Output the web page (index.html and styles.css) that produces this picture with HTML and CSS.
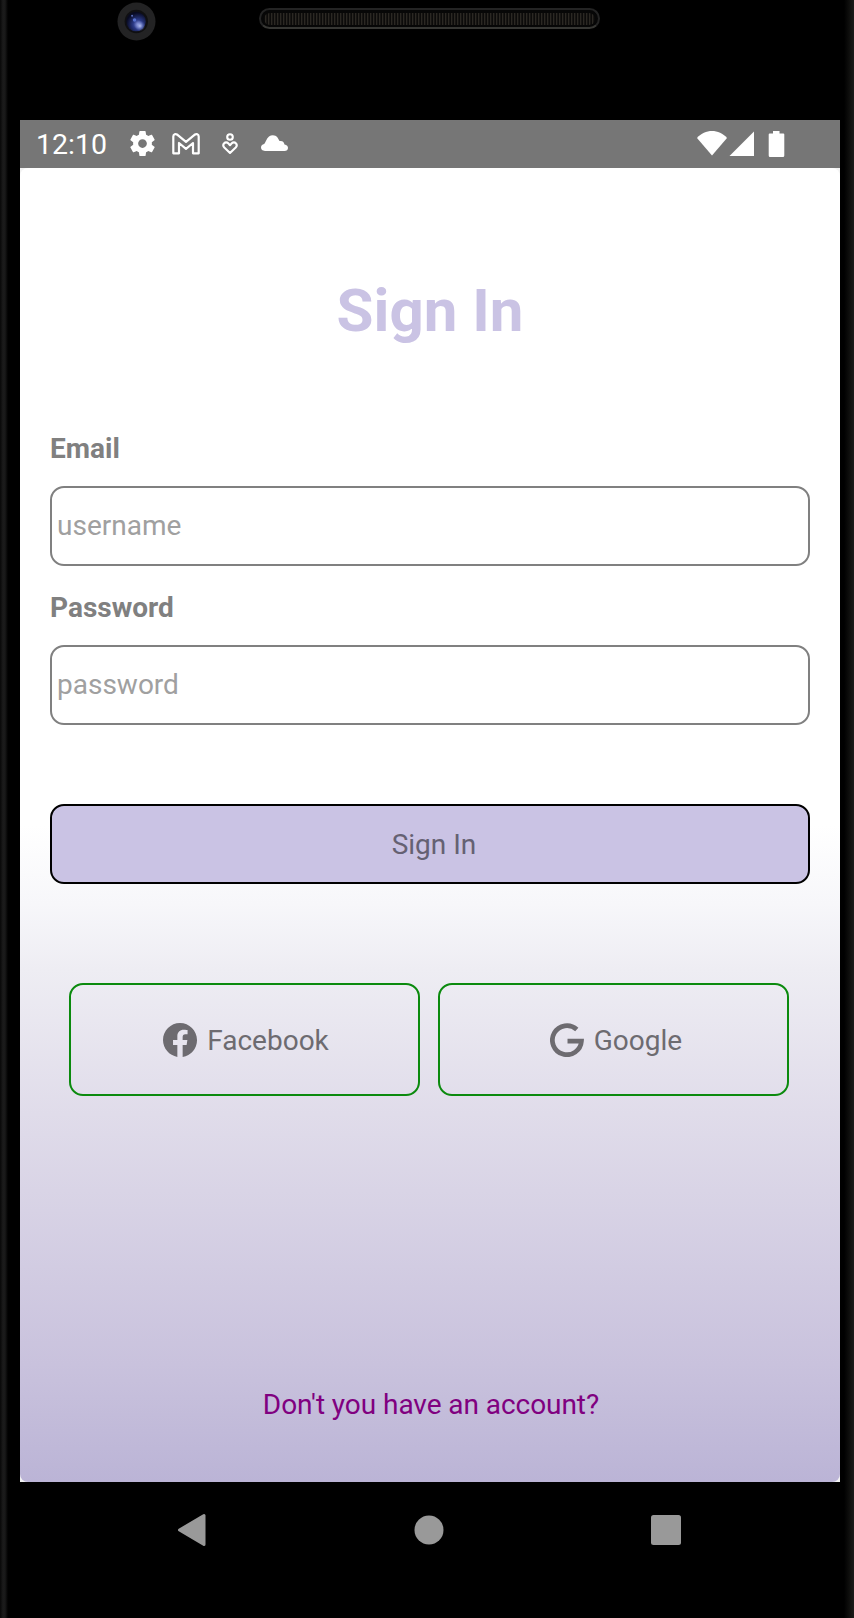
FILE: index.html
```html
<!DOCTYPE html>
<html lang="en">
<head>
<meta charset="utf-8">
<title>Sign In</title>
<link rel="stylesheet" href="styles.css">
</head>
<body>
<div class="phone">
  <header class="bezel">
    <svg class="camera" viewBox="0 0 40 40">
      <defs>
        <radialGradient id="lens" cx=".6" cy=".65" r=".6">
          <stop offset="0" stop-color="#8794dc"/><stop offset=".4" stop-color="#2a3986"/><stop offset="1" stop-color="#080a20"/>
        </radialGradient>
        <radialGradient id="glint">
          <stop offset="0" stop-color="#b4c0f2"/><stop offset="1" stop-color="#6878c8" stop-opacity="0"/>
        </radialGradient>
      </defs>
      <circle cx="20" cy="20" r="19.5" fill="#232324"/>
      <circle cx="19.8" cy="20" r="12" fill="#101012"/>
      <circle cx="19.5" cy="20" r="10" fill="url(#lens)"/>
      <circle cx="23.5" cy="24.5" r="5.5" fill="url(#glint)"/>
      <circle cx="18" cy="18.5" r="1.8" fill="#5670cc"/>
      <circle cx="15.5" cy="14" r="1" fill="#5b70c0"/>
    </svg>
    <div class="speaker"><div class="mesh"></div></div>
  </header>
  <main class="screen">
    <div class="status">
      <span class="clock">12:10</span>
      <svg class="gear" viewBox="2 2 20 20"><path fill="#fff" d="M19.43 12.98c.04-.32.07-.64.07-.98s-.03-.66-.07-.98l2.11-1.65c.19-.15.24-.42.12-.64l-2-3.46c-.12-.22-.39-.3-.61-.22l-2.49 1c-.52-.4-1.08-.73-1.69-.98l-.38-2.65C14.46 2.18 14.25 2 14 2h-4c-.25 0-.46.18-.49.42l-.38 2.65c-.61.25-1.17.59-1.69.98l-2.49-1c-.23-.09-.49 0-.61.22l-2 3.46c-.13.22-.07.49.12.64l2.11 1.65c-.04.32-.07.65-.07.98s.03.66.07.98l-2.11 1.65c-.19.15-.24.42-.12.64l2 3.46c.12.22.39.3.61.22l2.49-1c.52.4 1.08.73 1.69.98l.38 2.65c.03.24.24.42.49.42h4c.25 0 .46-.18.49-.42l.38-2.65c.61-.25 1.17-.59 1.69-.98l2.49 1c.23.09.49 0 .61-.22l2-3.46c.12-.22.07-.49-.12-.64l-2.11-1.65zM12 15.5c-1.93 0-3.5-1.57-3.5-3.500s1.570-3.500 3.500-3.500 3.500 1.570 3.500 3.500-1.570 3.500-3.500 3.500z"/></svg>
      <svg class="mail" viewBox="0 0 28 22"><path fill="none" stroke="#fff" stroke-width="2.200" stroke-linejoin="round" d="M1.300 3.500C1.300 1 3.500 .6 5.500 1.800L14 8.800 22.500 1.800C24.500 .6 26.700 1 26.700 3.500V20.300H21V10L14 15.800 7 10V20.300H1.300Z"/></svg>
      <svg class="care" viewBox="0 0 16 22"><g fill="none" stroke="#fff" stroke-width="2.100"><circle cx="8" cy="4" r="2.800"/><path stroke-linejoin="round" d="M8 20L2.300 14.500C-.5 11.500 3.500 7.500 6.200 10.300L8 12.200 9.800 10.300C12.500 7.500 16.500 11.500 13.700 14.500Z"/></g></svg>
      <svg class="cloud" viewBox="0 0 27 16"><path fill="#fff" d="M4 16Q0 15.500 0 12.500 0 9.500 3.200 9C4.500 7.500 5.500 3.500 8 1.500 10.500-.2 14.500-.2 16.500 2.500L18.500 6C22 5.500 23 7.500 23.500 9.500Q27 10 27 13 26.800 16 23.500 16Z"/></svg>
      <svg class="signals" viewBox="0 0 88 28">
        <g fill="#fff"><path d="M0 8C8-1.200 22-1.200 30 8L15 25.500Z"/><path d="M32.500 26L57 1.500V26Z"/><path d="M76 1V3.500H72.700Q71.700 3.500 71.700 4.500V25.500Q71.700 27 73 27H86Q87.300 27 87.300 25.500V4.500Q87.300 3.500 86.300 3.500H82.500V1Z"/></g>
      </svg>
    </div>
    <div class="window">
      <form class="content">
        <h1 class="title">Sign In</h1>
        <label class="label" for="email">Email</label>
        <input class="field" id="email" type="text" placeholder="username">
        <label class="label label-password" for="pass">Password</label>
        <input class="field" id="pass" type="password" placeholder="password">
        <button class="submit" type="button">Sign In</button>
        <div class="socials">
          <button class="social" type="button">
            <svg class="icon" viewBox="2 2 20 20"><path fill="currentColor" d="M12 2.040C6.500 2.040 2 6.530 2 12.060C2 17.060 5.660 21.210 10.440 21.960V14.960H7.900V12.060H10.440V9.850C10.440 7.340 11.930 5.960 14.220 5.960C15.310 5.960 16.450 6.150 16.450 6.150V8.620H15.190C13.950 8.620 13.560 9.390 13.560 10.180V12.060H16.340L15.890 14.960H13.560V21.960A10 10 0 0 0 22 12.060C22 6.530 17.500 2.040 12 2.040Z"/></svg>
            <span>Facebook</span>
          </button>
          <button class="social social-google" type="button">
            <svg class="icon" viewBox="0 0 33 33"><path fill="none" stroke="currentColor" stroke-width="4.600" d="M26 6.300A14.100 14.100 0 1 0 30.500 17.600H17"/></svg>
            <span>Google</span>
          </button>
        </div>
        <a class="signup">Don't you have an account?</a>
      </form>
    </div>
  </main>
  <nav class="nav">
    <svg viewBox="0 0 30 34"><path fill="#999" stroke="#999" stroke-width="3" stroke-linejoin="round" d="M2.500 17L27 2.500V31.500Z"/></svg>
    <svg viewBox="0 0 30 34"><circle cx="15" cy="17" r="14.500" fill="#999"/></svg>
    <svg viewBox="0 0 30 34"><rect y="2" width="30" height="30" rx="2.500" fill="#999"/></svg>
  </nav>
</div>
</body>
</html>
```
FILE: styles.css
```css
* { box-sizing: border-box; }
body { margin: 0; background: #000; font-family: Roboto, sans-serif; font-size: 28px; }
.phone {
  width: 854px; height: 1618px; padding: 0 14px 0 20px;
  display: flex; flex-direction: column;
  background: linear-gradient(90deg, #080808 0, #1b1b1b 3px, #191919 5px, #000 8px, #000 844px, #161614 852px, #1b1b1a 854px);
}
.bezel { height: 120px; display: flex; align-items: flex-start; }
.camera { width: 39px; height: 39px; margin: 2px 0 0 97px; }
.speaker {
  width: 341px; height: 21px; margin: 8px 0 0 103px; padding: 3px;
  border: 2px solid #242424; border-bottom-color: #373734; border-radius: 11px; background: #070707;
}
.mesh {
  height: 12px; border-radius: 6px;
  background: repeating-linear-gradient(90deg, #0c0b0a 0 1px, #2b2823 1px 2px, #171513 2px 3px);
}
.screen { height: 1362px; display: flex; flex-direction: column; background: #767676; }
.status { height: 48px; padding-left: 16px; display: flex; align-items: flex-start; color: #fff; }
.clock { width: 94px; line-height: 50px; font-size: 28.5px; }
.gear { width: 25px; height: 25px; margin-top: 11px; }
.mail { width: 28px; height: 22px; margin: 13px 0 0 17px; }
.care { width: 16px; height: 22px; margin: 13px 0 0 22px; }
.cloud { width: 27px; height: 16px; margin: 15px 0 0 23px; }
.signals { width: 88px; height: 28px; margin: 10px 0 0 409px; }
.window { height: 1314px; background: #f2f2f2; }
.content {
  height: 1314px; padding: 0 30px; border-radius: 8px;
  display: flex; flex-direction: column;
  background: linear-gradient(#fff 0 50%, #f7f7fa 56%, #eeedf3 61%, #e0dcea 72%, #c9c2dd 91%, #bbb4d6 100%);
}
.title { margin: 103px 0 0; font-size: 60px; line-height: 80px; font-weight: 700; text-align: center; color: #cac3e4; }
.label { margin-top: 78px; line-height: 40px; font-weight: 700; color: #808080; }
.label-password { margin-top: 22px; }
.field {
  width: 760px; height: 80px; margin-top: 17px; padding: 0 5px 1px;
  border: 2px solid #808080; border-radius: 14px; background: transparent;
  font: 28px Roboto, sans-serif; color: #666; outline: none;
}
.field::placeholder { color: #a0a0a0; opacity: 1; }
.submit {
  height: 80px; margin-top: 79px; padding: 1px 0 0 8px;
  border: 2px solid #000; border-radius: 14px; background: #cac3e4;
  font: 28px Roboto, sans-serif; color: #656172;
}
.socials { display: flex; gap: 18px; margin: 99px 20px 0 19px; }
.social {
  width: 351px; height: 113px; padding: 0 0 0 3px;
  display: flex; align-items: center; justify-content: center; gap: 10px;
  border: 2px solid #0b8a0e; border-radius: 14px; background: transparent;
  font: 28px Roboto, sans-serif; color: #6d6b70;
}
.social-google { padding-left: 5px; }
.social span { padding-top: 2px; }
.icon { width: 34px; height: 34px; }
.signup { margin-top: 289px; padding-left: 2px; line-height: 40px; letter-spacing: -.06px; text-align: center; color: #800080; }
.nav { height: 96px; padding: 0 159px 0 157px; display: flex; justify-content: space-between; }
.nav svg { width: 30px; height: 34px; margin-top: 31px; }
```
